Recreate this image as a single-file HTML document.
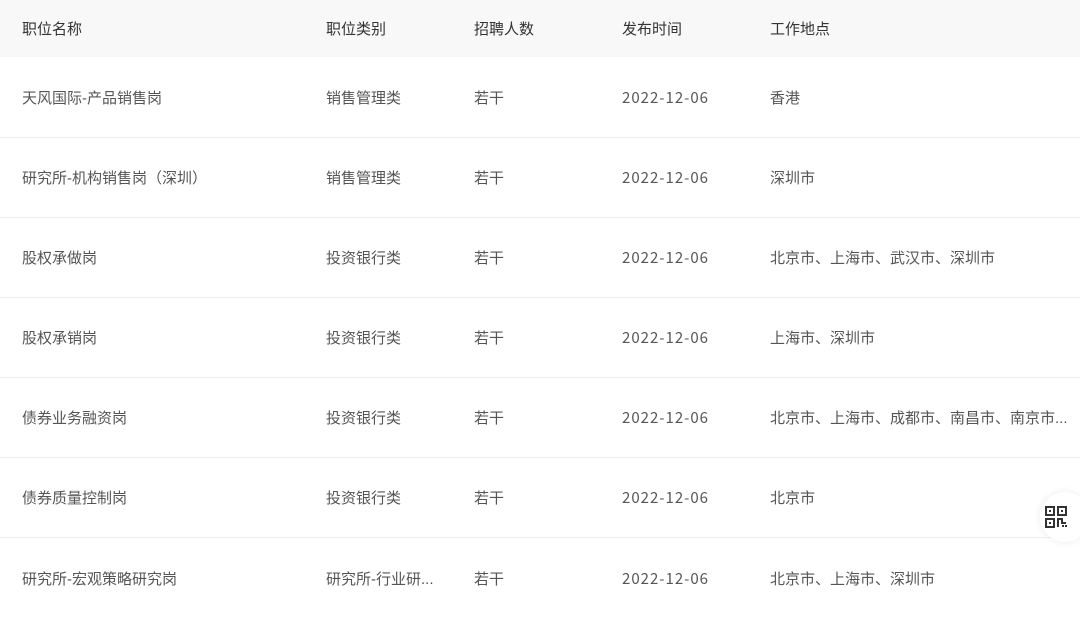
<!DOCTYPE html>
<html><head><meta charset="utf-8"><style>
body{margin:0;width:1080px;height:605px;overflow:hidden;background:#fff;font-family:"Liberation Sans","Noto Sans CJK SC",sans-serif;font-size:15px;position:relative}
.row{position:absolute;left:0;width:1080px;border-bottom:1px solid #eee;box-sizing:border-box}
.h{top:0;height:57px;background:#f8f8f8;color:#333;border:none}
.c{position:absolute;top:50%;margin-top:2px;transform:translateY(-50%);white-space:nowrap;color:#555;line-height:20px}
.d{font-family:"Noto Sans CJK SC",sans-serif;letter-spacing:1px;margin-top:1px}
.h .c{color:#333;margin-top:1px}
.qr{position:absolute;left:1040px;top:492px;width:50px;height:50px;border-radius:50%;background:#fff;box-shadow:0 0 8px rgba(0,0,0,.08)}
</style></head><body>
<div class="row h" style="height:57px"><span class="c" style="left:22px">职位名称</span><span class="c" style="left:326px">职位类别</span><span class="c" style="left:474px">招聘人数</span><span class="c" style="left:622px">发布时间</span><span class="c" style="left:770px">工作地点</span></div>
<div class="row" style="top:57px;height:81px"><span class="c" style="left:22px">天风国际-产品销售岗</span><span class="c" style="left:326px">销售管理类</span><span class="c" style="left:474px">若干</span><span class="c d" style="left:622px">2022-12-06</span><span class="c" style="left:770px">香港</span></div>
<div class="row" style="top:137px;height:81px"><span class="c" style="left:22px">研究所-机构销售岗（深圳）</span><span class="c" style="left:326px">销售管理类</span><span class="c" style="left:474px">若干</span><span class="c d" style="left:622px">2022-12-06</span><span class="c" style="left:770px">深圳市</span></div>
<div class="row" style="top:217px;height:81px"><span class="c" style="left:22px">股权承做岗</span><span class="c" style="left:326px">投资银行类</span><span class="c" style="left:474px">若干</span><span class="c d" style="left:622px">2022-12-06</span><span class="c" style="left:770px">北京市、上海市、武汉市、深圳市</span></div>
<div class="row" style="top:297px;height:81px"><span class="c" style="left:22px">股权承销岗</span><span class="c" style="left:326px">投资银行类</span><span class="c" style="left:474px">若干</span><span class="c d" style="left:622px">2022-12-06</span><span class="c" style="left:770px">上海市、深圳市</span></div>
<div class="row" style="top:377px;height:81px"><span class="c" style="left:22px">债券业务融资岗</span><span class="c" style="left:326px">投资银行类</span><span class="c" style="left:474px">若干</span><span class="c d" style="left:622px">2022-12-06</span><span class="c" style="left:770px">北京市、上海市、成都市、南昌市、南京市...</span></div>
<div class="row" style="top:457px;height:81px"><span class="c" style="left:22px">债券质量控制岗</span><span class="c" style="left:326px">投资银行类</span><span class="c" style="left:474px">若干</span><span class="c d" style="left:622px">2022-12-06</span><span class="c" style="left:770px">北京市</span></div>
<div class="row" style="top:537px;height:81px;border:none"><span class="c" style="left:22px">研究所-宏观策略研究岗</span><span class="c" style="left:326px">研究所-行业研...</span><span class="c" style="left:474px">若干</span><span class="c d" style="left:622px">2022-12-06</span><span class="c" style="left:770px">北京市、上海市、深圳市</span></div>
<div class="qr"><svg style="position:absolute;left:4px;top:13px" width="24" height="24" viewBox="0 0 24 24" fill="none" stroke="#333" stroke-width="2">
<rect x="2" y="2" width="8" height="8"/><rect x="14" y="2" width="8" height="8"/><rect x="2" y="14" width="8" height="8"/>
<rect x="5" y="5" width="2" height="2" fill="#333" stroke="none"/><rect x="17" y="5" width="2" height="2" fill="#333" stroke="none"/><rect x="5" y="17" width="2" height="2" fill="#333" stroke="none"/>
<path d="M14 22V14h4v4h4"/><rect x="18" y="20" width="2" height="2" fill="#333" stroke="none"/><rect x="21" y="20" width="2" height="2" fill="#333" stroke="none"/></svg></div>
</body></html>
